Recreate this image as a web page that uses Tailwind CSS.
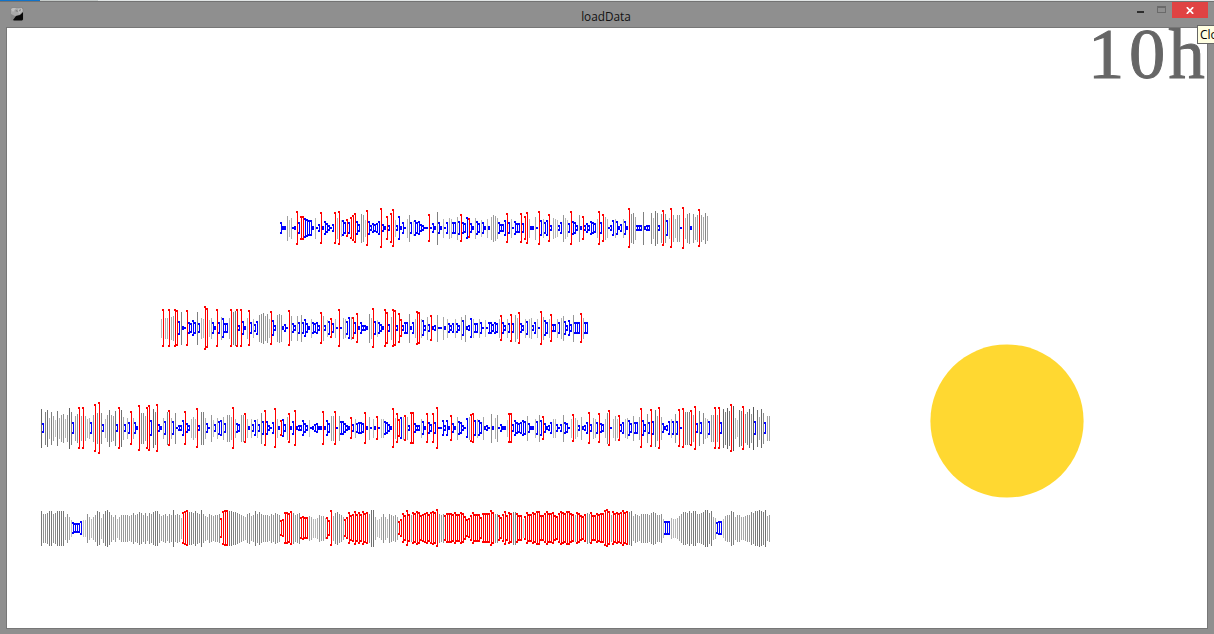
<!DOCTYPE html>
<html lang="en">
<head>
<meta charset="utf-8">
<title>loadData</title>
<script src="https://cdn.jsdelivr.net/npm/@tailwindcss/browser@4"></script>
</head>
<body class="h-[634px] w-[1214px] overflow-hidden bg-[#8f8f8f]">
<div class="relative flex h-[634px] w-[1214px] flex-col overflow-hidden">
  <div class="flex h-px w-full shrink-0">
    <div class="w-10 bg-[#1173c9]"></div><div class="w-[58px] bg-[#c5cbc9]"></div><div class="flex-1 bg-[#e2e6e6]"></div>
  </div>
  <header class="relative flex h-[26px] shrink-0 items-start justify-between border-t border-[#737373]">
    <svg class="ml-[10px] mt-[5px]" width="14" height="14" viewBox="0 0 14 14">
      <rect x="0.5" y="0.5" width="13" height="13" rx="1.5" fill="#858585"/>
      <path d="M1 7V2l2-1h6l4 1v4L9 8 5 9z" fill="#a8a8a8"/>
      <path d="M1 2l2-1h3L3 5zM8 2l4-1v3L9 7z" fill="#c0c0c0"/>
      <path d="M5 4l2-1 1 2zM9 3l2-1-1 3z" fill="#777"/>
      <path d="M3 13L6 9l4-1 3-3v7.5l-1 1H4z" fill="#080808"/>
    </svg>
    <div class="absolute left-0 top-[5px] w-[1212px] text-center font-['Open_Sans',sans-serif] text-[11.8px] leading-[18px] text-[#111]">loadData</div>
    <div class="mr-[6px] flex items-start">
      <div class="mr-[13px] mt-[9px] h-[2px] w-[7px] bg-[#2d2d2d]"></div>
      <div class="mr-[6px] mt-[4px] h-[7px] w-[9px] border border-t-2 border-[#6a6a6a]"></div>
      <div class="flex h-[16px] w-[36px] items-center justify-center bg-[#e04343]">
        <svg class="mr-px" width="8" height="7" viewBox="0 0 8 7"><path d="M.8.2L7.2 6.8M7.2.2L.8 6.8" stroke="#fff" stroke-width="1.7"/></svg>
      </div>
    </div>
  </header>
  <main class="relative ml-[6px] h-[602px] w-[1202px] shrink-0 border border-[#777] bg-white">
    <svg width="1200" height="600" viewBox="7 28 1200 600" class="block" id="chart">
      <circle cx="1007" cy="421" r="76.6" fill="#ffd831"/>
      <g font-family="'Liberation Serif', serif" font-size="72.5" fill="#666" stroke="#666" stroke-width="1">
        <text x="1088" y="78">1</text><text x="1129" y="78">0</text><text x="1168.5" y="78">h</text>
      </g>
    </svg>
  </main>
  <div class="absolute left-[1197px] top-[25px] h-[19px] w-10 whitespace-nowrap border border-[#666] bg-[#ffffe1] pl-[2px] font-['Open_Sans',sans-serif] text-[12px] leading-[18px] text-black">Close</div>
</div>
<script>
// Each entry is a kind (g = normal, b = low, r = peak) and its half height.
const rows = [
 {x:281,y:228,d:"b6b2b2g12g8g10b1b2r17b6r12r12b10b9b8b8b2g10b1b4r16b2b7b5b3b1b4r16g10r17g8b8b6r9b6r11r13r15b7b4g14g13g8r18b7b3b5b4b5b7r20b4b2r12b3r15r19g8b3b12b2b6b1g9g13b6g7b8b6b7b4b3b1b1r14b1b5b2g16b6b2g9b1b6g10g9b6b6g11b7r14b6b5b11r10b5b2g10b7b5g8b6b2g9b2g11g13g12g10b6b4b4b8r15b6g9b1b7b5b5r15b5r12r16g9b2b2g11b1r17b8g9b6b8r14b3g10g9g8b3b6g13g10g8b5r17b7b6b3g13b2r12b3b5b3b7b6b5g9r17b6r14g11g9b1b3b8g9b7b2b4g9b7b2r20g14g15g11b3b3b3g16b2b3b3g15g10g17g15b3g14r18g14b8g10r20g13g9g13g13b1r21g10g14g15b2g14g11g13r19g13g11g15g12"},
 {x:161,y:328,d:"g9r19g10g10r19g11g12r19r18b7g16b2b1r18b6b5b8b6g16b5g10g9r22r20g8g10b6b2r19b6g11b10b5b5g10r19g16g17r19b3r19b7b2g10r18b6g9b4b7g13g14g15g12g14g9r17b8b3g13g14g13b2b4b1r18g12b5b3g12b6g13b6b9b5b2g9b6b5b6b3r16g12b3g8b7r10b5g9b1r19b1g10g9b7b11g11r11b6r15b2b6b3b3b2g14g10r20b7g8b6b4b2r19r16b4g11r19r18b3r15r9b3b6b6g14b2b6g9r17r16g9b8b3g11b4r13b2b3g13b1b1g11b2g9b5b3b5g9b5b3g11b8g13b2b3b10g9b5b5g9b6b1g8b1b6b6b4b6b5g9r13b6b3g9b5r14b5g13g10r16b5b3g9b7g9g10b3b6g9b1r17g11b8b6g9r14b4b4g9b6g10g12b7b3b8b4g13b6b6b6r15g10b6b6"},
 {x:41,y:428,d:"g19b5g16g18g10g16g12g8g17g10g13g14g9g13g20g16b6g12g14r21g12r21g12g9g10b6g13r24g15r26g15b4g9g13g18g13g12g17b4r21g18g11b4g10b6r17g10b6b2r23g15g15g12r21r23b8g19g16r24b4b2g10b7g16r18g10b7g15b1b3b3b8r17b5b3g9g11g9r20b3g16g16g10b5b1g13g8b4g10b7b8g11b5g13g13g11r21g9b5b4g13g13r15g9b2g9b4b8g9b4g15b7r18b7b3b1b6r20g9b2r8b9b4g11r15b2b7r18b2b3b3b8b5b3g8b1b2b4b5b2b2r17b2b8b5g12g12r17b1g12b7b7b5b3b2r11b4g9b5b6b6b5r16b2g11b1g9b2r12b1g9g9b7b6b4b2r20g10r15r9b11g11r13g11b3r16r16b5b3b3g9b7b2r15b6b4r15b6r21b1b1b8b3b8b2r13b5b2g11b7b6b3b1b10g11r14r15b8g9b8b6g11b2b3b1g14b2g10g13b1b4b2b2g8r15r15b4b8b6b5b6b8b7g12b5b2b2g9b7g13b8r12b5b2b3b6g9g9b4b1b4g13b6b5b1g9r14g10g8b3g11b2b3b6r16b4g10g9b6r15b5b4g9g15r18b1g9g12g9r13b4b6g9g10b8b5g12b6b6g11r20b8b4g14b6r19b7g18g12r21g11b5b2b3b7g9b7g14b7r19b1r20g16g16g16r18g13r22b5g17b6g15g10g9b7g13g13r21g13r21b6g19g16g20g17r24g22g10g8g18g17r22g14g16g19g14g21b7g18g11g19g15b6g12g12"},
 {x:41,y:528,d:"g17g14g14g15g17g17g14g15g17g17g17g17g11g14g11g8b6b5b5b5b7g8g8g14g11g9g11g13g17g16g10g14g17g18g16g13g11g13g9g11g13g13g13g13g12g13g15g13g14g16g15g13g15g12g15g14g16g17g17g14g12g13g14g12g14g13g18g13g14g13g10r16r17r18g16g16g15g17g15g14g18g14g12g11g14g13g12g13g13g14r10r17r18r18g17g17g16g16g15g14g13g12g11g14g15g12g13g17g14g16g14g13g13g13g12g14g13g15g14g13r8r9r16r16r15r17g15g13g14g15r11r12r11r11g12g11g9g9g10g13g12g12g10r11r8r18g12g15g16g14g13g11r9r11r16r13r14r17r14r16r14r17r15r16g14g18g18g11g8g9g11g14g11g9g14g13g12g13g11r7r9r15r13r18r14g13r16r15r17r16r13r14r15r16r14r16r17r16r19g14g13g14r13r15r15r15r14r16r14r14r16r15r12r9r10r13r16r14r14r14r11r15r15r15r15r18r16g14g14r13r11r14r17r13r16r15g16g16r15r13r13g9r12r16r14r14r16r15r17r17r13r13r15r17r15r15r16r13r12r15r17r16r15r17r17r15r14g13r16r15r13r12r14g15g14r16r13r13r15r14r15r15r18r19r17g13r17r15r16r15r16r18r16r17g16g17g12g14g13g12g14g14g14g14g13g15g16g15g13g13g14g9b7b7b7g10g9g9g10g12g14g16g16g15g17g15g17g17g14g14g15g16g18g18g15g17g11g10b6b7b7g9g12g13g13g17g16g11g13g13g11g11g12g13g13g16g15g17g17g18g17g16g18g12g13"}
];
const chart = document.getElementById('chart');
const rect = (x, y, w, h, fill) => {
  const r = document.createElementNS('http://www.w3.org/2000/svg', 'rect');
  for (const [k, v] of Object.entries({x, y, width: w, height: h, fill, 'shape-rendering': 'crispEdges'})) r.setAttribute(k, v);
  chart.appendChild(r);
};
for (const row of rows) {
  [...row.d.matchAll(/([gbr])(\d+)/g)].forEach((m, i) => {
    const x = row.x + 2 * i, h = +m[2];
    if (m[1] === 'g') {
      const c = 256 - 8 * h;
      rect(x, row.y - h, 1, 2 * h + 1, `rgb(${c},${c},${c})`);
    } else {
      const c = m[1] === 'r' ? '#ff0000' : '#0000ff';
      rect(x, row.y - h, 1, 2 * h, c);
      rect(x - 1, row.y - h, 2, 2, c);
      rect(x - 1, row.y + h - 2, 2, 2, c);
    }
  });
}
</script>
</body>
</html>
